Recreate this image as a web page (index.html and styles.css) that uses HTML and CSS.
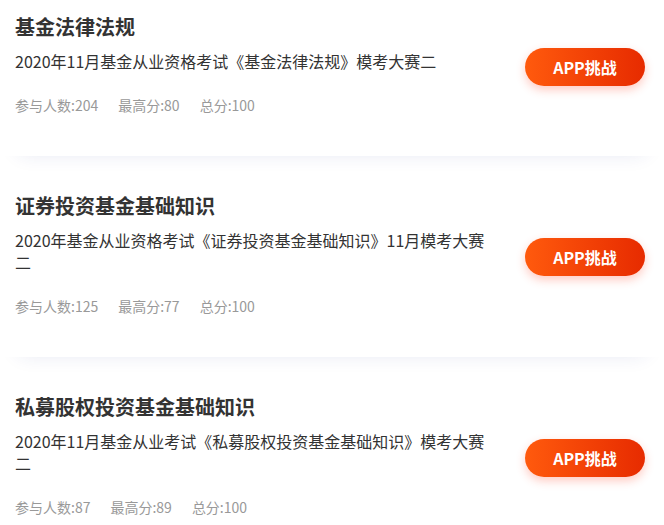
FILE: index.html
```html
<!DOCTYPE html>
<html lang="zh-CN">
<head>
<meta charset="utf-8">
<title>模考大赛</title>
<link rel="stylesheet" href="styles.css">
</head>
<body>
<div class="list">
  <div class="card">
    <div class="info">
      <div class="title">基金法律法规</div>
      <div class="desc">2020年11月基金从业资格考试《基金法律法规》模考大赛二</div>
      <div class="stats"><span>参与人数:204</span><span>最高分:80</span><span>总分:100</span></div>
    </div>
    <div class="btn">APP挑战</div>
  </div>
  <div class="card">
    <div class="info">
      <div class="title">证券投资基金基础知识</div>
      <div class="desc">2020年基金从业资格考试《证券投资基金基础知识》11月模考大赛二</div>
      <div class="stats"><span>参与人数:125</span><span>最高分:77</span><span>总分:100</span></div>
    </div>
    <div class="btn">APP挑战</div>
  </div>
  <div class="card">
    <div class="info">
      <div class="title">私募股权投资基金基础知识</div>
      <div class="desc">2020年11月基金从业考试《私募股权投资基金基础知识》模考大赛二</div>
      <div class="stats"><span>参与人数:87</span><span>最高分:89</span><span>总分:100</span></div>
    </div>
    <div class="btn">APP挑战</div>
  </div>
</div>
</body>
</html>
```
FILE: styles.css
```css
html, body {
  margin: 0;
  padding: 0;
  background: #fff;
}
body {
  font-family: "Noto Sans CJK SC", "Noto Sans", sans-serif;
  color: #333;
}
.list {
  display: flex;
  flex-direction: column;
  gap: 23px;
}
.card {
  display: flex;
  align-items: center;
  justify-content: space-between;
  padding: 13px 19px 41px 15px;
  background: #fff;
  box-shadow: 0 15px 20px -20px rgba(40, 50, 140, 0.16);
}
.info {
  width: 480px;
}
.title {
  font-size: 20px;
  font-weight: bold;
  line-height: 28px;
  color: #333;
}
.desc {
  margin-top: 9px;
  font-size: 16px;
  line-height: 22px;
  color: #333;
}
.stats {
  margin-top: 23px;
  display: flex;
  gap: 20px;
  font-size: 14px;
  line-height: 20px;
  color: #999;
}
.btn {
  margin-top: 6px;
  width: 120px;
  height: 38px;
  border-radius: 19px;
  background: linear-gradient(90deg, #ff5a0d, #e72b00);
  box-shadow: 0 4px 10px rgba(255, 70, 40, 0.28);
  color: #fff;
  font-size: 16px;
  font-weight: bold;
  line-height: 38px;
  text-align: center;
}
```
